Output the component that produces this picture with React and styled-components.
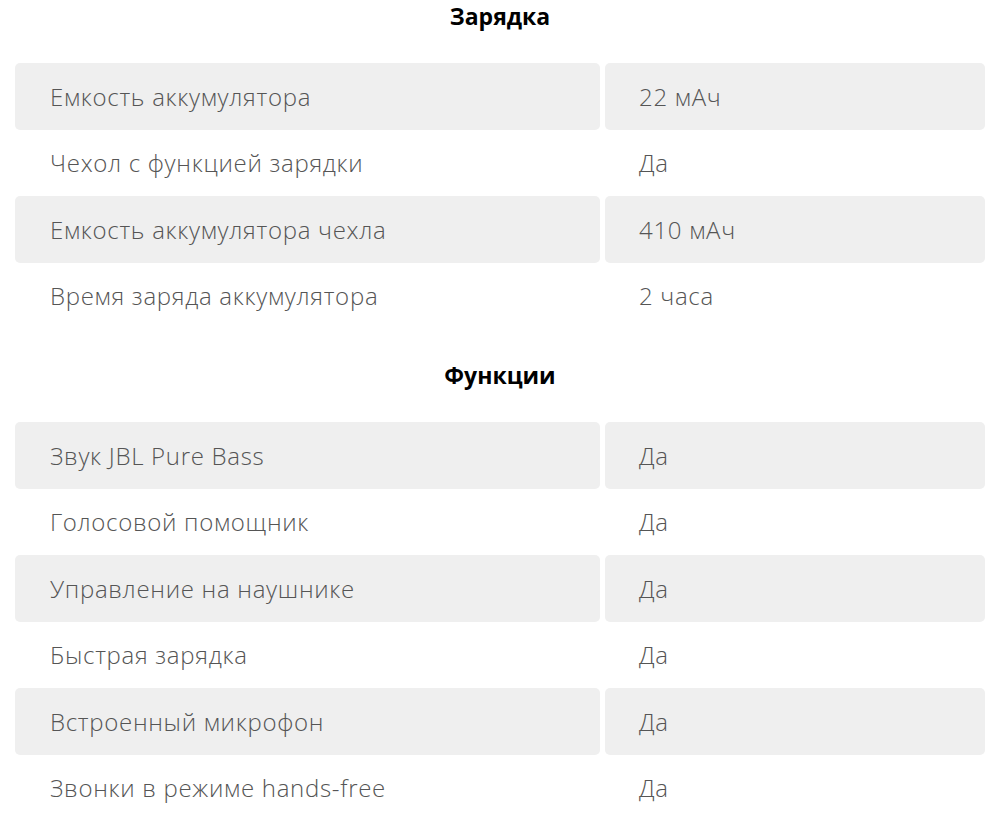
import React from 'react'
import styled, { createGlobalStyle } from 'styled-components'

const GlobalStyle = createGlobalStyle`
    html, body {
        margin: 0;
        padding: 0;
        background: #ffffff;
    }
    body {
        font-family: "Open Sans", "Liberation Sans", Arial, sans-serif;
    }
`

const sections = [
    {
        title: 'Зарядка',
        rows: [
            ['Емкость аккумулятора', '22 мАч'],
            ['Чехол с функцией зарядки', 'Да'],
            ['Емкость аккумулятора чехла', '410 мАч'],
            ['Время заряда аккумулятора', '2 часа'],
        ],
    },
    {
        title: 'Функции',
        rows: [
            ['Звук JBL Pure Bass', 'Да'],
            ['Голосовой помощник', 'Да'],
            ['Управление на наушнике', 'Да'],
            ['Быстрая зарядка', 'Да'],
            ['Встроенный микрофон', 'Да'],
            ['Звонки в режиме hands-free', 'Да'],
        ],
    },
]

function App() {
    return (
        <Page>
            <GlobalStyle />
            {sections.map((section, i) => (
                <Section key={section.title} $first={i === 0}>
                    <Title>{section.title}</Title>
                    <Table>
                        {section.rows.map(([name, value], j) => (
                            <Row key={name}>
                                <Cell $shaded={j % 2 === 0} $name>{name}</Cell>
                                <Cell $shaded={j % 2 === 0}>{value}</Cell>
                            </Row>
                        ))}
                    </Table>
                </Section>
            ))}
        </Page>
    )
}

export default App

const Page = styled.div`
    width: 1000px;
    padding: 0 15px;
    box-sizing: border-box;
`

const Section = styled.section`
    margin-top: ${({ $first }) => ($first ? '0' : '30px')};
`

const Title = styled.h2`
    margin: 0 0 31px;
    height: 32px;
    line-height: 32px;
    text-align: center;
    font-size: 23px;
    font-weight: 700;
    letter-spacing: 0;
    color: #000000;
`

const Table = styled.div`
    display: flex;
    flex-direction: column;
`

const Row = styled.div`
    display: grid;
    grid-template-columns: 585px 380px;
    column-gap: 5px;
    height: 66.5px;
`

const Cell = styled.div`
    display: flex;
    align-items: center;
    padding-left: ${({ $name }) => ($name ? '35px' : '34px')};
    border-radius: 5px;
    background: ${({ $shaded }) => ($shaded ? '#efefef' : 'transparent')};
    font-size: 24px;
    font-weight: 300;
    letter-spacing: 0.7px;
    color: #555555;
`
